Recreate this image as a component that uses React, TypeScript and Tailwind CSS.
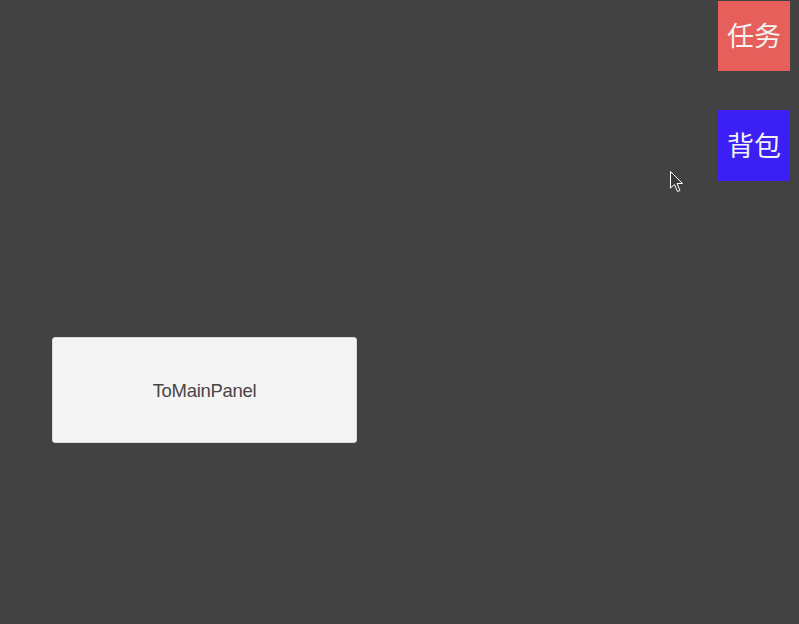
export default function App() {
  return (
    <div className="relative flex h-[624px] w-[799px] justify-between overflow-hidden bg-[#424242] font-['Liberation_Sans','Noto_Sans_CJK_SC',sans-serif]">
      {/* Left panel button */}
      <div className="pl-[52px] pt-[337px]">
        <button className="flex h-[106px] w-[305px] items-center justify-center rounded-[3px] border border-[#d8d8d8] bg-[#f4f4f4] pt-px text-[18.5px] tracking-[-0.3px] text-[#4a4446]">
          ToMainPanel
        </button>
      </div>

      {/* Right side buttons */}
      <div className="flex flex-col gap-[39px] pr-[9px] pt-px">
        <button className="flex h-[70px] w-[72px] items-center justify-center bg-[#e65f5a] pb-px font-['Noto_Sans_CJK_SC',sans-serif] text-[27px] text-[#f2f2f2]">
          任务
        </button>
        <button className="flex h-[71px] w-[72px] items-center justify-center bg-[#3b1ff5] pb-px font-['Noto_Sans_CJK_SC',sans-serif] text-[27px] text-[#f2f2f2]">
          背包
        </button>
      </div>

      {/* Mouse cursor */}
      <svg className="absolute left-[670px] top-[171px]" width="16" height="24" viewBox="0 0 16 24">
        <path d="M0.5 0.5 L0.5 17 L4.5 13.5 L7.5 20.5 L10 19.5 L7 12.5 L12.5 12.5 Z" fill="#3a3a3a" stroke="#ffffff" strokeWidth="1" />
      </svg>
    </div>
  )
}
